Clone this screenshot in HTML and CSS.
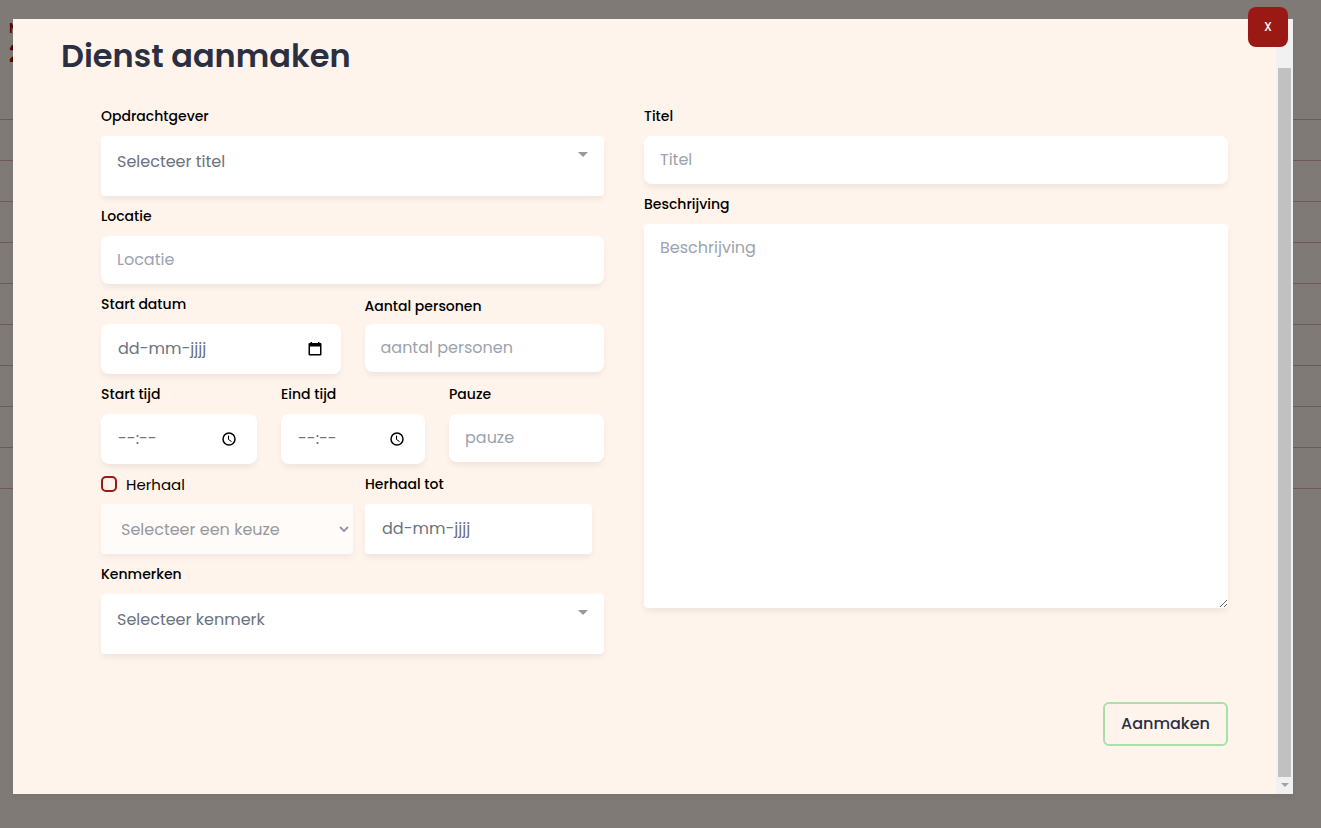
FILE: index.html
```html
<!DOCTYPE html>
<html lang="nl">
<head>
<meta charset="utf-8">
<meta name="viewport" content="width=device-width, initial-scale=1">
<title>Dienst aanmaken</title>
<link rel="stylesheet" href="styles.css">
</head>
<body>
<div class="calendar" aria-hidden="true">
  <div class="calendar-head"><span class="calendar-day">M</span><span class="calendar-date">2</span></div>
  <div class="calendar-row"></div><div class="calendar-row"></div><div class="calendar-row"></div>
  <div class="calendar-row"></div><div class="calendar-row"></div><div class="calendar-row"></div>
  <div class="calendar-row"></div><div class="calendar-row"></div><div class="calendar-row"></div>
</div>
<div class="overlay">
  <section class="modal" role="dialog" aria-labelledby="modal-title">
    <button class="close" type="button" aria-label="Sluiten">X</button>
    <div class="modal-body">
      <h1 class="title" id="modal-title">Dienst aanmaken</h1>
      <form class="form">
        <div class="columns">
          <div class="stack">
            <div class="field">
              <label class="label" for="client">Opdrachtgever</label>
              <div class="picker">
                <select class="control control-picker" id="client"><option>Selecteer titel</option></select>
                <svg class="picker-arrow" viewBox="0 0 10 5" aria-hidden="true"><path d="M0 0h10L5 5z"/></svg>
              </div>
            </div>
            <div class="field">
              <label class="label" for="location">Locatie</label>
              <input class="control" id="location" type="text" placeholder="Locatie">
            </div>
            <div class="row row-half">
              <div class="field">
                <label class="label" for="start-date">Start datum</label>
                <div class="control control-group">
                  <input class="bare" id="start-date" type="text" placeholder="dd-mm-jjjj">
                  <svg class="icon" viewBox="0 0 16 16" aria-hidden="true"><path fill-rule="evenodd" d="M3.500 1H5v1h6V1h1.500v1H13.500a1 1 0 0 1 1 1v10.500a1 1 0 0 1-1 1h-11a1 1 0 0 1-1-1V3a1 1 0 0 1 1-1h1zM3 5.500V13h10V5.500z"/></svg>
                </div>
              </div>
              <div class="field field-tight">
                <label class="label" for="people">Aantal personen</label>
                <input class="control" id="people" type="text" placeholder="aantal personen">
              </div>
            </div>
            <div class="row row-times">
              <div class="field">
                <label class="label" for="start-time">Start tijd</label>
                <div class="control control-group control-time">
                  <input class="bare" id="start-time" type="text" placeholder="--:--">
                  <svg class="icon icon-line" viewBox="0 0 16 16" aria-hidden="true"><circle cx="8" cy="8" r="6"/><path d="M7.500 4.500v4l3 2" stroke-width="1"/></svg>
                </div>
              </div>
              <div class="field">
                <label class="label" for="end-time">Eind tijd</label>
                <div class="control control-group control-time">
                  <input class="bare" id="end-time" type="text" placeholder="--:--">
                  <svg class="icon icon-line" viewBox="0 0 16 16" aria-hidden="true"><circle cx="8" cy="8" r="6"/><path d="M7.500 4.500v4l3 2" stroke-width="1"/></svg>
                </div>
              </div>
              <div class="field">
                <label class="label" for="pause">Pauze</label>
                <input class="control" id="pause" type="text" placeholder="pauze">
              </div>
            </div>
            <div class="row row-repeat">
              <div class="field">
                <label class="check"><input class="checkbox" type="checkbox"><span class="check-text">Herhaal</span></label>
                <div class="picker picker-disabled">
                  <select class="control control-select" aria-label="Herhaling" disabled><option>Selecteer een keuze</option></select>
                  <svg class="chevron" viewBox="0 0 10 6" aria-hidden="true"><path d="M1 1l4 4 4-4"/></svg>
                </div>
              </div>
              <div class="field field-inset">
                <label class="label" for="repeat-until">Herhaal tot</label>
                <div class="control control-group control-square">
                  <input class="bare" id="repeat-until" type="text" placeholder="dd-mm-jjjj">
                </div>
              </div>
            </div>
            <div class="field">
              <label class="label" for="traits">Kenmerken</label>
              <div class="picker">
                <select class="control control-picker" id="traits"><option>Selecteer kenmerk</option></select>
                <svg class="picker-arrow" viewBox="0 0 10 5" aria-hidden="true"><path d="M0 0h10L5 5z"/></svg>
              </div>
            </div>
          </div>
          <div class="stack">
            <div class="field">
              <label class="label" for="name">Titel</label>
              <input class="control" id="name" type="text" placeholder="Titel">
            </div>
            <div class="field">
              <label class="label" for="description">Beschrijving</label>
              <textarea class="control control-area" id="description" placeholder="Beschrijving"></textarea>
            </div>
          </div>
        </div>
        <div class="actions"><button class="submit" type="submit">Aanmaken</button></div>
      </form>
    </div>
    <div class="scrollbar" aria-hidden="true">
      <div class="scrollbar-thumb"></div>
      <svg class="scrollbar-arrow" viewBox="0 0 8 4"><path d="M0 0h8L4 4z"/></svg>
    </div>
  </section>
</div>
</body>
</html>
```

FILE: styles.css
```css
* { box-sizing: border-box; }

body {
  margin: 0;
  min-height: 100vh;
  background: #fff4eb;
  color: #000;
  font: 16px/24px Poppins, Inter, sans-serif;
}

button, input, select, textarea { font: inherit; }

.calendar { overflow: hidden; }
.calendar-head {
  display: flex;
  flex-direction: column;
  height: 120px;
  padding: 16px 9px;
  border-bottom: 1px solid #d8b4b0;
  color: #b00000;
}
.calendar-day { font-size: 14px; font-weight: 500; }
.calendar-date { font-size: 24px; font-weight: 700; line-height: 28px; }
.calendar-row { height: 41px; border-bottom: 1px solid #d8b4b0; }

.overlay {
  position: absolute;
  inset: 0;
  min-height: 100%;
  padding: 19px 28px 34px 13px;
  background: rgba(0, 0, 0, 0.5);
}

.modal {
  position: relative;
  display: grid;
  grid-template-columns: 1fr 17px;
  background: #fff4eb;
  box-shadow: 0 4px 6px rgba(0, 0, 0, 0.05);
}
.modal-body { padding: 17px 48px 48px; }

.close {
  position: absolute;
  top: -12px;
  right: 5px;
  width: 40px;
  height: 40px;
  padding: 0;
  border: 0;
  border-radius: 8px;
  background: #9b1915;
  color: #fff;
  font-size: 12px;
  font-weight: 500;
}

.title {
  margin: 0 0 30px;
  color: #2b2f42;
  font-size: 32px;
  font-weight: 600;
  line-height: 40px;
}

.form { padding-left: 40px; }
.columns {
  display: grid;
  grid-template-columns: 503fr 584fr;
  gap: 40px;
}
.stack { display: flex; flex-direction: column; gap: 10px; }
.row { display: grid; align-items: start; gap: 24px; }
.row-half { grid-template-columns: 1fr 1fr; }
.row-times { grid-template-columns: 156fr 144fr 155fr; }
.row-repeat { grid-template-columns: 252fr 239fr; gap: 12px; }

.field { display: flex; flex-direction: column; gap: 10px; min-width: 0; }
.field-tight { gap: 6px; }
.field-tight .label { line-height: 24px; }
.field-inset { padding-right: 12px; }

.label { font-size: 14px; font-weight: 500; line-height: 20px; }

.control {
  display: block;
  width: 100%;
  min-width: 0;
  height: 48px;
  padding: 0 16px 2px;
  border: 0;
  border-radius: 8px;
  background: #fff;
  color: #6b7280;
  box-shadow: 0 4px 6px -1px rgba(0, 0, 0, 0.07);
}
.control::placeholder { color: #9ca3af; opacity: 1; }
.control-group { display: flex; align-items: center; height: 50px; padding: 0 18px 0 17px; }
.control-time { padding-right: 20px; }
.control-square { border-radius: 4px; }
.control-area {
  height: 384px;
  padding: 12px 16px;
  border-radius: 4px;
  resize: vertical;
}

.bare {
  flex: 1;
  min-width: 0;
  padding: 0;
  border: 0;
  background: transparent;
  color: #6b7280;
}
.bare::placeholder { color: #6b7280; opacity: 1; }

.icon { flex: none; width: 16px; height: 16px; }
.icon-line { fill: none; stroke: #000; stroke-width: 1.5; }

.picker { position: relative; }
.picker-disabled { opacity: 0.7; }
.control-picker {
  height: 60px;
  padding: 0 32px 8px 16px;
  border-radius: 4px;
  appearance: none;
}
.control-select {
  height: 50px;
  padding: 2px 20px 0;
  border-radius: 4px;
  color: #6b7280;
  opacity: 1;
  appearance: none;
}
.picker-arrow {
  position: absolute;
  top: 16px;
  right: 16px;
  width: 10px;
  height: 5px;
  fill: #999;
}
.chevron {
  position: absolute;
  top: 22px;
  right: 4px;
  width: 10px;
  height: 6px;
  fill: none;
  stroke: #6b7280;
  stroke-width: 2;
}

.check {
  display: flex;
  align-items: center;
  gap: 9px;
  height: 20px;
  font-size: 15px;
  line-height: 20px;
}
.check-text { padding-top: 2px; }
.checkbox {
  width: 16px;
  height: 16px;
  margin: 0;
  border: 2px solid #9b1915;
  border-radius: 5px;
  appearance: none;
}
.checkbox:checked { background: #9b1915; }

.actions { display: flex; justify-content: flex-end; margin-top: 48px; }
.submit {
  height: 44px;
  padding: 0 16px;
  border: 2px solid #a9dfab;
  border-radius: 6px;
  background: transparent;
  color: #2b2f42;
  font-weight: 500;
}

.scrollbar {
  display: flex;
  flex-direction: column;
  align-items: center;
  padding-top: 49px;
  background: #f1f1f1;
}
.scrollbar-thumb { flex: 1; width: 13px; background: #c1c1c1; }
.scrollbar-arrow { width: 8px; height: 4px; margin: 6px 0 7px; fill: #a3a3a3; }
```
